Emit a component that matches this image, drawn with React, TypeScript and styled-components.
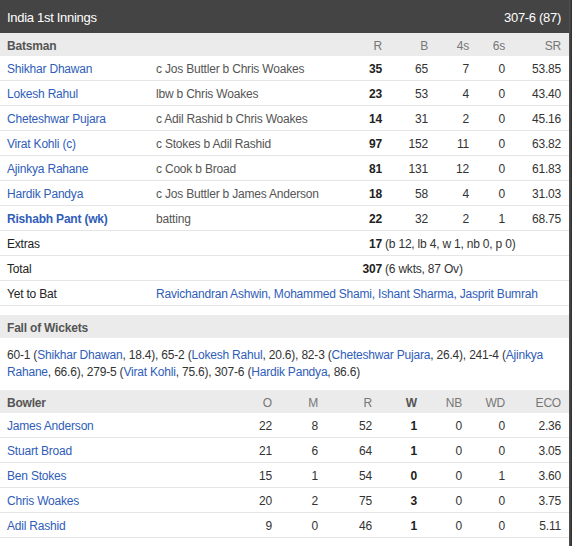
import React from "react";
import styled, { createGlobalStyle, css } from "styled-components";

const GlobalStyle = createGlobalStyle`
  html, body { margin: 0; padding: 0; background: #fff; }
  *, *::before, *::after { box-sizing: border-box; }
  body {
    font-family: "Liberation Sans", Arial, sans-serif;
    font-size: 12px;
    color: #333;
  }
`;

const Page = styled.div`
  display: flex;
  width: 572px;
  min-height: 546px;
`;

const Card = styled.div`
  width: 569px;
  display: flex;
  flex-direction: column;
`;

const EdgeShade = styled.div`
  width: 3px;
  background: linear-gradient(to right, #555, #2c2c2c);
`;

const TitleBar = styled.div`
  height: 33px;
  background: #444;
  color: #fff;
  display: flex;
  align-items: center;
  justify-content: space-between;
  padding: 1px 8px 0 7px;
  font-size: 13px;
  letter-spacing: -0.3px;
`;

const SectionHead = styled.div<{ $gapTop?: boolean }>`
  height: 23px;
  background: #ebebeb;
  display: flex;
  align-items: center;
  padding: 2px 7px 0;
  font-weight: bold;
  color: #555;
  letter-spacing: -0.2px;
  margin-top: ${(p) => (p.$gapTop ? "9px" : "0")};
`;

const batCols = "149px 186px 40px 46px 41px 36px 56px";
const bowlCols = "225px 40px 46px 54px 45px 45px 43px 56px";

const GridRow = styled.div<{ $cols: string; $head?: boolean }>`
  display: grid;
  grid-template-columns: ${(p) => p.$cols};
  align-items: center;
  padding: 2px 7px 0;
  letter-spacing: -0.2px;
  white-space: nowrap;
  ${(p) =>
    p.$head
      ? css`
          height: 23px;
          background: #ebebeb;
          color: #777;
        `
      : css`
          height: 25px;
          border-bottom: 1px solid #e6e6e6;
        `}
`;

const HeadLabel = styled.div<{ $bold?: boolean; $left?: boolean }>`
  text-align: ${(p) => (p.$left ? "left" : "right")};
  font-weight: ${(p) => (p.$bold ? "bold" : "normal")};
  color: ${(p) => (p.$bold ? "#555" : "#777")};
`;

const PlayerLink = styled.a<{ $bold?: boolean }>`
  color: #2f5db9;
  text-decoration: none;
  font-weight: ${(p) => (p.$bold ? "bold" : "normal")};
`;

const Dismissal = styled.div`
  color: #555;
  overflow: hidden;
`;

const Num = styled.div<{ $bold?: boolean }>`
  text-align: right;
  color: ${(p) => (p.$bold ? "#222" : "#333")};
  font-weight: ${(p) => (p.$bold ? "bold" : "normal")};
`;

const Label = styled.div`
  color: #222;
`;

const Spread = styled.div<{ $from: number }>`
  grid-column: ${(p) => p.$from} / -1;
  color: #333;
  padding-left: 3px;
`;

const YetList = styled.div`
  grid-column: 2 / -1;
  color: #2f5db9;
`;

const FowText = styled.div`
  padding: 9px 7px;
  line-height: 17px;
  color: #333;
  letter-spacing: -0.2px;
`;

type Bat = { name: string; how: string; r: number; b: number; f: number; s: number; sr: string; bold?: boolean };

const batsmen: Bat[] = [
  { name: "Shikhar Dhawan", how: "c Jos Buttler b Chris Woakes", r: 35, b: 65, f: 7, s: 0, sr: "53.85" },
  { name: "Lokesh Rahul", how: "lbw b Chris Woakes", r: 23, b: 53, f: 4, s: 0, sr: "43.40" },
  { name: "Cheteshwar Pujara", how: "c Adil Rashid b Chris Woakes", r: 14, b: 31, f: 2, s: 0, sr: "45.16" },
  { name: "Virat Kohli (c)", how: "c Stokes b Adil Rashid", r: 97, b: 152, f: 11, s: 0, sr: "63.82" },
  { name: "Ajinkya Rahane", how: "c Cook b Broad", r: 81, b: 131, f: 12, s: 0, sr: "61.83" },
  { name: "Hardik Pandya", how: "c Jos Buttler b James Anderson", r: 18, b: 58, f: 4, s: 0, sr: "31.03" },
  { name: "Rishabh Pant (wk)", how: "batting", r: 22, b: 32, f: 2, s: 1, sr: "68.75", bold: true },
];

type Bowl = { name: string; o: number; m: number; r: number; w: number; nb: number; wd: number; eco: string };

const bowlers: Bowl[] = [
  { name: "James Anderson", o: 22, m: 8, r: 52, w: 1, nb: 0, wd: 0, eco: "2.36" },
  { name: "Stuart Broad", o: 21, m: 6, r: 64, w: 1, nb: 0, wd: 0, eco: "3.05" },
  { name: "Ben Stokes", o: 15, m: 1, r: 54, w: 0, nb: 0, wd: 1, eco: "3.60" },
  { name: "Chris Woakes", o: 20, m: 2, r: 75, w: 3, nb: 0, wd: 0, eco: "3.75" },
  { name: "Adil Rashid", o: 9, m: 0, r: 46, w: 1, nb: 0, wd: 0, eco: "5.11" },
];

const fow: [string, string, string][] = [
  ["60-1", "Shikhar Dhawan", "18.4"],
  ["65-2", "Lokesh Rahul", "20.6"],
  ["82-3", "Cheteshwar Pujara", "26.4"],
  ["241-4", "Ajinkya Rahane", "66.6"],
  ["279-5", "Virat Kohli", "75.6"],
  ["307-6", "Hardik Pandya", "86.6"],
];

export default function App() {
  return (
    <>
      <GlobalStyle />
      <Page>
        <Card>
          <TitleBar>
            <span>India 1st Innings</span>
            <span>307-6 (87)</span>
          </TitleBar>

          <GridRow $cols={batCols} $head>
            <HeadLabel $left $bold>Batsman</HeadLabel>
            <div />
            <HeadLabel>R</HeadLabel>
            <HeadLabel>B</HeadLabel>
            <HeadLabel>4s</HeadLabel>
            <HeadLabel>6s</HeadLabel>
            <HeadLabel>SR</HeadLabel>
          </GridRow>

          {batsmen.map((p) => (
            <GridRow $cols={batCols} key={p.name}>
              <div>
                <PlayerLink href="#" $bold={p.bold}>{p.name}</PlayerLink>
              </div>
              <Dismissal>{p.how}</Dismissal>
              <Num $bold>{p.r}</Num>
              <Num>{p.b}</Num>
              <Num>{p.f}</Num>
              <Num>{p.s}</Num>
              <Num>{p.sr}</Num>
            </GridRow>
          ))}

          <GridRow $cols={batCols}>
            <Label>Extras</Label>
            <div />
            <Num $bold>17</Num>
            <Spread $from={4}>(b 12, lb 4, w 1, nb 0, p 0)</Spread>
          </GridRow>
          <GridRow $cols={batCols}>
            <Label>Total</Label>
            <div />
            <Num $bold>307</Num>
            <Spread $from={4}>(6 wkts, 87 Ov)</Spread>
          </GridRow>
          <GridRow $cols={batCols}>
            <Label>Yet to Bat</Label>
            <YetList>Ravichandran Ashwin, Mohammed Shami, Ishant Sharma, Jasprit Bumrah</YetList>
          </GridRow>

          <SectionHead $gapTop>Fall of Wickets</SectionHead>
          <FowText>
            {fow.map(([score, name, over], i) => (
              <React.Fragment key={score}>
                {score} (<PlayerLink href="#">{name}</PlayerLink>, {over}){i < fow.length - 1 ? ", " : ""}
              </React.Fragment>
            ))}
          </FowText>

          <GridRow $cols={bowlCols} $head>
            <HeadLabel $left $bold>Bowler</HeadLabel>
            <HeadLabel>O</HeadLabel>
            <HeadLabel>M</HeadLabel>
            <HeadLabel>R</HeadLabel>
            <HeadLabel $bold>W</HeadLabel>
            <HeadLabel>NB</HeadLabel>
            <HeadLabel>WD</HeadLabel>
            <HeadLabel>ECO</HeadLabel>
          </GridRow>

          {bowlers.map((b) => (
            <GridRow $cols={bowlCols} key={b.name}>
              <div>
                <PlayerLink href="#">{b.name}</PlayerLink>
              </div>
              <Num>{b.o}</Num>
              <Num>{b.m}</Num>
              <Num>{b.r}</Num>
              <Num $bold>{b.w}</Num>
              <Num>{b.nb}</Num>
              <Num>{b.wd}</Num>
              <Num>{b.eco}</Num>
            </GridRow>
          ))}
        </Card>
        <EdgeShade />
      </Page>
    </>
  );
}
